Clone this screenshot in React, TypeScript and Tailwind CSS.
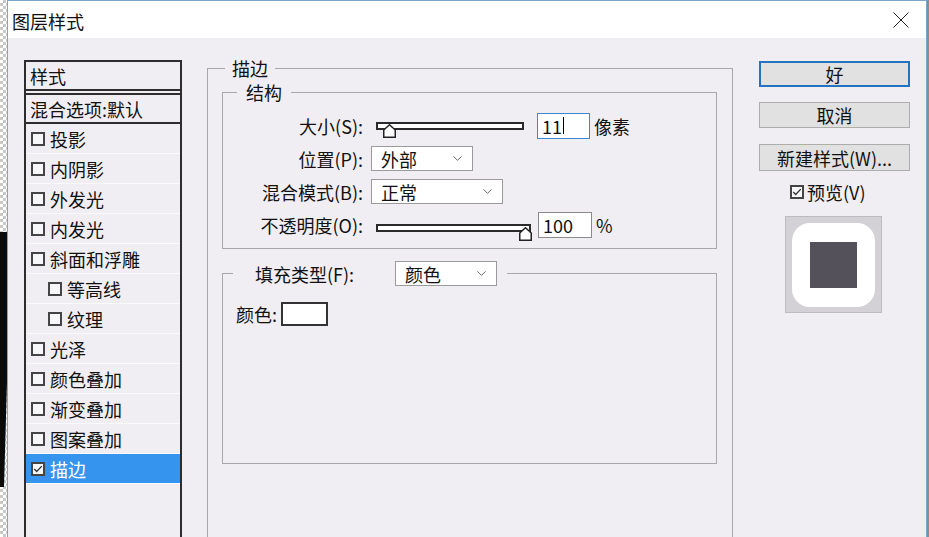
import { ChevronDown } from "lucide-react";

const styleItems = [
  { label: "投影" },
  { label: "内阴影" },
  { label: "外发光" },
  { label: "内发光" },
  { label: "斜面和浮雕" },
  { label: "等高线", indent: true },
  { label: "纹理", indent: true },
  { label: "光泽" },
  { label: "颜色叠加" },
  { label: "渐变叠加" },
  { label: "图案叠加" },
  { label: "描边", checked: true, active: true },
];

function CheckBox({ checked = false }: { checked?: boolean }) {
  return (
    <span className="w-[14px] h-[14px] shrink-0 border-2 border-[#444] bg-[#f7f6f8] flex items-center justify-center">
      {checked && (
        <svg width="12" height="12" viewBox="0 0 12 12">
          <path d="M1.5 6 L4.5 9 L10.5 2.5" fill="none" stroke="#333" strokeWidth="1.6" />
        </svg>
      )}
    </span>
  );
}

function Thumb() {
  return (
    <svg width="13" height="14" viewBox="0 0 13 14">
      <polygon
        points="0.75,13.25 0.75,6 6.5,0.75 12.25,6 12.25,13.25"
        fill="#fff"
        stroke="#222"
        strokeWidth="1.5"
      />
    </svg>
  );
}

function Select({ value, width }: { value: string; width: string }) {
  return (
    <div
      className={`${width} h-[25px] bg-white border border-[#9a9a9a] flex items-center justify-between pl-[9px] pr-[7px]`}
    >
      <span>{value}</span>
      <ChevronDown size={15} strokeWidth={1.4} color="#555" />
    </div>
  );
}

function Row({ label, children }: { label: string; children: React.ReactNode }) {
  return (
    <div className="flex items-center h-[33px]">
      <span className="w-[126px] text-right">{label}</span>
      <div className="flex items-center ml-[8px]">{children}</div>
    </div>
  );
}

function StylesList() {
  return (
    <div className="ml-[16px] mt-[22px] w-[158px] h-[500px] shrink-0 border-2 border-[#2d2d2d] flex flex-col">
      <div className="h-[27px] flex items-center pl-[4px] border-b-[6px] border-double border-[#2d2d2d] box-content">
        样式
      </div>
      <div className="h-[27px] flex items-center pl-[4px] border-b-2 border-[#2d2d2d] box-content">
        混合选项:默认
      </div>
      {styleItems.map((item) => (
        <div
          key={item.label}
          className={`h-[30px] flex items-center gap-[5px] border-b border-[#faf9fb] ${
            item.indent ? "pl-[22px]" : "pl-[5px]"
          } ${item.active ? "bg-[#3595ee] text-white" : ""}`}
        >
          <CheckBox checked={item.checked} />
          <span>{item.label}</span>
        </div>
      ))}
    </div>
  );
}

function StrokePanel() {
  return (
    <fieldset className="ml-[25px] mt-[18px] w-[526px] h-[520px] shrink-0 border border-[#a9a7ad] pl-[14px]">
      <legend className="ml-[3px] px-[7px] leading-[24px]">描边</legend>

      {/* 结构 */}
      <fieldset className="w-[495px] border border-[#a9a7ad] pl-[14px]">
        <legend className="px-[9px] leading-[24px]">结构</legend>
        <div className="flex flex-col pt-[5px] pb-[7px] -ml-[14px] pl-[14px]">
          <Row label="大小(S):">
            <div className="relative ml-[5px] w-[148px] h-[8px] border-2 border-[#2a2a2a] bg-white">
              <div className="absolute left-[5px] top-0">
                <Thumb />
              </div>
            </div>
            <div className="ml-[13px] w-[53px] h-[26px] bg-white border border-[#3b87d6] flex items-center pl-[4px]">
              <span>11</span>
              <span className="w-px h-[17px] bg-black ml-[1px]" />
            </div>
            <span className="ml-[4px]">像素</span>
          </Row>
          <Row label="位置(P):">
            <Select value="外部" width="w-[102px]" />
          </Row>
          <Row label="混合模式(B):">
            <Select value="正常" width="w-[132px]" />
          </Row>
          <Row label="不透明度(O):">
            <div className="relative ml-[5px] mt-[6px] w-[155px] h-[8px] border-2 border-[#2a2a2a] bg-white">
              <div className="absolute left-[141px] top-[1px]">
                <Thumb />
              </div>
            </div>
            <div className="ml-[7px] w-[54px] h-[26px] bg-white border border-[#8a8a8a] flex items-center pl-[4px]">
              100
            </div>
            <span className="ml-[4px]">%</span>
          </Row>
        </div>
      </fieldset>

      {/* 填充 */}
      <fieldset className="mt-[12px] w-[495px] h-[203px] border border-[#a9a7ad] pl-[10px]">
        <legend className="flex items-center pl-[22px] pr-[10px]">
          <span>填充类型(F):</span>
          <div className="ml-[41px]">
            <Select value="颜色" width="w-[102px]" />
          </div>
        </legend>
        <div className="mt-[16px] ml-[3px] flex items-center">
          <span>颜色:</span>
          <span className="ml-[4px] w-[47px] h-[24px] border-2 border-[#333] bg-white" />
        </div>
      </fieldset>
    </fieldset>
  );
}

function RightColumn() {
  return (
    <div className="ml-[26px] mt-[23px] w-[151px] shrink-0 flex flex-col">
      <button className="h-[26px] bg-[#e1e1e1] border-2 border-[#2473c2]">好</button>
      <button className="mt-[15px] h-[26px] bg-[#e1e1e1] border border-[#adadad]">取消</button>
      <button className="mt-[16px] h-[27px] bg-[#e1e1e1] border border-[#adadad]">新建样式(W)...</button>
      <div className="mt-[10px] h-[22px] pl-[31px] flex items-center gap-[3px]">
        <CheckBox checked />
        <span>预览(V)</span>
      </div>
      <div className="mt-[13px] ml-[26px] w-[97px] h-[97px] bg-[#d3d1d5] border border-[#bdbbc0] flex items-center justify-center">
        <div className="w-[83px] h-[84px] rounded-[18px] bg-white flex items-center justify-center">
          <div className="w-[47px] h-[46px] bg-[#55515a]" />
        </div>
      </div>
    </div>
  );
}

export default function App() {
  return (
    <div className="w-[929px] h-[537px] overflow-hidden flex bg-[#8c8c8c] text-[18px] leading-none text-[#111] font-['Noto_Sans_CJK_SC','Noto_Sans',sans-serif]">
      {/* canvas behind the dialog */}
      <div className="w-[7px] shrink-0 flex flex-col bg-[repeating-conic-gradient(#c9c9c9_0_25%,#fff_0_50%)] bg-[length:6px_6px]">
        <svg className="mt-[232px]" width="7" height="255" viewBox="0 0 7 255">
          <path d="M0 0 L7 0 L7 150 L4 255 L0 255 Z" fill="#0a0a0a" />
        </svg>
      </div>

      <div className="w-[920px] shrink-0 flex flex-col border-l border-r border-t border-[#7da6c8] bg-[#f1eef3]">
        {/* title bar */}
        <div className="h-[37px] shrink-0 bg-white flex items-center justify-between pl-[4px] pr-[17px]">
          <span className="mt-[2px]">图层样式</span>
          <svg width="16" height="16" viewBox="0 0 16 16">
            <path d="M0.5 0.5 L15.5 15.5 M15.5 0.5 L0.5 15.5" stroke="#222" strokeWidth="1" />
          </svg>
        </div>

        <div className="flex flex-1 min-h-0 overflow-hidden">
          <StylesList />
          <StrokePanel />
          <RightColumn />
        </div>
      </div>
      <div className="flex-1" />
    </div>
  );
}
